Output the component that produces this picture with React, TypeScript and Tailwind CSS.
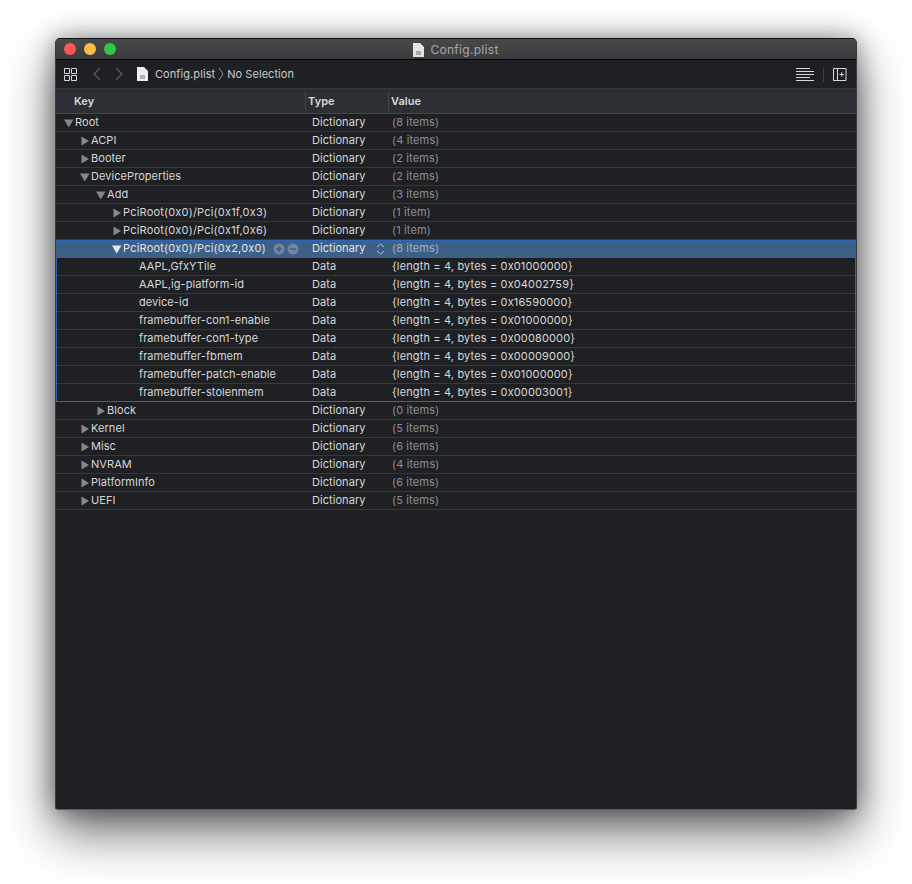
import React from "react";

type Row = { d: number; k: string; t: string; v: string; o?: boolean };
const before: Row[] = [
  { d: 0, k: "Root", t: "Dictionary", v: "(8 items)", o: true },
  { d: 1, k: "ACPI", t: "Dictionary", v: "(4 items)" },
  { d: 1, k: "Booter", t: "Dictionary", v: "(2 items)" },
  { d: 1, k: "DeviceProperties", t: "Dictionary", v: "(2 items)", o: true },
  { d: 2, k: "Add", t: "Dictionary", v: "(3 items)", o: true },
  { d: 3, k: "PciRoot(0x0)/Pci(0x1f,0x3)", t: "Dictionary", v: "(1 item)" },
  { d: 3, k: "PciRoot(0x0)/Pci(0x1f,0x6)", t: "Dictionary", v: "(1 item)" },
];
const leaves: [string, string][] = [
  ["AAPL,GfxYTile", "{length = 4, bytes = 0x01000000}"],
  ["AAPL,ig-platform-id", "{length = 4, bytes = 0x04002759}"],
  ["device-id", "{length = 4, bytes = 0x16590000}"],
  ["framebuffer-con1-enable", "{length = 4, bytes = 0x01000000}"],
  ["framebuffer-con1-type", "{length = 4, bytes = 0x00080000}"],
  ["framebuffer-fbmem", "{length = 4, bytes = 0x00009000}"],
  ["framebuffer-patch-enable", "{length = 4, bytes = 0x01000000}"],
  ["framebuffer-stolenmem", "{length = 4, bytes = 0x00003001}"],
];
const after: Row[] = [
  { d: 2, k: "Block", t: "Dictionary", v: "(0 items)" },
  { d: 1, k: "Kernel", t: "Dictionary", v: "(5 items)" },
  { d: 1, k: "Misc", t: "Dictionary", v: "(6 items)" },
  { d: 1, k: "NVRAM", t: "Dictionary", v: "(4 items)" },
  { d: 1, k: "PlatformInfo", t: "Dictionary", v: "(6 items)" },
  { d: 1, k: "UEFI", t: "Dictionary", v: "(5 items)" },
];

function Tri({ open, color = "#85878a" }: { open?: boolean; color?: string }) {
  return (
    <svg width="10" height="10" viewBox="0 0 10 10" className="shrink-0">
      {open ? <path d="M0 1.5H9.5L4.75 9.5Z" fill={color} /> : <path d="M1.5 0.5V9.5L9 5Z" fill={color} />}
    </svg>
  );
}

const indent = ["pl-[8px]", "pl-[24px]", "pl-[40px]", "pl-[56px]"];

function TreeRow({ r }: { r: Row }) {
  return (
    <div className="flex h-[18px] items-center border-b border-[#36383b] text-[#d6d7d8]">
      <div className={`flex w-[256px] items-center gap-[1px] ${r.d === 3 ? "tracking-[0.2px]" : "tracking-[0.06px]"} ${indent[r.d]}`}>
        <Tri open={r.o} />
        <span>{r.k}</span>
      </div>
      <div className="w-[80px] tracking-[0.06px]">{r.t}</div>
      <div className="text-[#8d8f92]">{r.v}</div>
    </div>
  );
}

export default function App() {
  return (
    <div className="h-[884px] w-[912px] overflow-hidden bg-white pl-[55px] pt-[38px] text-[11px] tracking-[0.14px] [font-family:Inter,'Noto_Sans',sans-serif]">
      <div className="flex h-[772px] w-[802px] flex-col overflow-hidden rounded-t-[5px] rounded-b-[3px] border-x border-b border-x-[#3b3c3f] border-b-[#5a5b5e] bg-[#1f2024] shadow-[0_22px_50px_rgba(0,0,0,0.58),0_0_24px_rgba(0,0,0,0.4)]">
        <div className="relative flex h-[22px] shrink-0 items-center justify-center gap-[6px] border-b border-t border-b-black border-t-[#111] bg-gradient-to-b from-[#48494b] to-[#3a3b3d] pt-[1px] text-[12px] tracking-[0.3px] text-[#a8a9aa]">
          <div className="absolute left-[8px] top-[4px] flex gap-[8px]">
            <span className="h-[12px] w-[12px] rounded-full bg-[#fc5753]" />
            <span className="h-[12px] w-[12px] rounded-full bg-[#fdbc40]" />
            <span className="h-[12px] w-[12px] rounded-full bg-[#33c748]" />
          </div>
          <svg width="11" height="14" viewBox="0 0 11 14">
            <path d="M0 0H7L11 4V14H0Z" fill="#e4e4e4" />
            <path d="M3 8H8V12H3Z" fill="#a9a9a9" />
          </svg>
          <span>Config.plist</span>
        </div>
        <div className="flex h-[29px] shrink-0 items-center border-b border-[#35373a] bg-[#1f2024] pl-[8px] pr-[9px] text-[#c9cacb]">
          <svg width="13" height="13" viewBox="0 0 13 13" fill="none" stroke="#d8d8d8" className="mr-[15px]">
            <path d="M.5.5H5.5V5.5H.5ZM7.5 .5H12.5V5.5H7.5ZM.5 7.5H5.5V12.5H.5ZM7.5 7.5H12.5V12.5H7.5Z" />
          </svg>
          <svg width="10" height="14" viewBox="0 0 10 14" fill="none" stroke="#5d5f62" strokeWidth="1.2" className="mr-[12px]">
            <path d="M8 1L2 7L8 13" />
          </svg>
          <svg width="10" height="14" viewBox="0 0 10 14" fill="none" stroke="#5d5f62" strokeWidth="1.2" className="mr-[13px]">
            <path d="M2 1L8 7L2 13" />
          </svg>
          <svg width="11" height="14" viewBox="0 0 11 14" className="mr-[7px]">
            <path d="M0 0H7L11 4V14H0Z" fill="#eeeeee" />
            <path d="M3 8H8V12H3Z" fill="#b0b0b0" />
          </svg>
          <span className="tracking-[0.08px]">Config.plist</span>
          <svg width="6" height="14" viewBox="0 0 6 14" fill="none" stroke="#8a8b8d" className="mx-[3px]">
            <path d="M1 1L5 7L1 13" />
          </svg>
          <span className="tracking-[0.05px]">No Selection</span>
          <svg width="18" height="13" viewBox="0 0 18 13" stroke="#d8d8d8" className="ml-auto mr-[9px]">
            <path d="M0 .5H14M0 3.5H18M0 6.5H18M0 9.5H14M0 12.5H18" />
          </svg>
          <div className="mr-[9px] h-[15px] w-px bg-[#3c3e41]" />
          <svg width="14" height="13" viewBox="0 0 14 13" fill="none" stroke="#d8d8d8">
            <path d="M.5.5H13V12.5H.5ZM4.5.5V12.5M6.5 6.5H11M8.75 4.2V8.8" />
          </svg>
        </div>
        <div className="flex h-[25px] shrink-0 items-center border-b border-[#45474a] bg-[#2c2f33] font-semibold tracking-[0.06px] text-[#d8d9da]">
          <div className="h-full w-[249px] pl-[18px] leading-[24px]">Key</div>
          <div className="flex h-[19px] w-[83px] items-center border-l border-[#45474a] pl-[2px]">Type</div>
          <div className="flex h-[19px] items-center border-l border-[#45474a] pl-[2px]">Value</div>
        </div>
        <div className="flex-1">
          {before.map((r) => <TreeRow key={r.k} r={r} />)}
          <div className="h-[162px] border-x border-b border-[#2d67b8]">
            <div className="-mx-px flex h-[18px] items-center border-b border-[#3d6088] bg-[#3d6088] text-[#e2e5e9] shadow-[inset_0_1px_0_#2d67b8]">
              <div className="flex w-[217px] items-center gap-[1px] pl-[56px] tracking-[0.2px]">
                <Tri open color="#e6e8eb" />
                <span>PciRoot(0x0)/Pci(0x2,0x0)</span>
              </div>
              <div className="flex w-[39px] items-center gap-[2px]">
                <svg width="12" height="12" viewBox="0 0 12 12"><circle cx="6" cy="6" r="5.5" fill="#73859b" /><path d="M3 6H9M6 3V9" stroke="#3d6088" strokeWidth="1.5" /></svg>
                <svg width="12" height="12" viewBox="0 0 12 12"><circle cx="6" cy="6" r="5.5" fill="#73859b" /><path d="M3 6H9" stroke="#3d6088" strokeWidth="1.5" /></svg>
              </div>
              <div className="flex w-[80px] items-center justify-between pr-[7px] tracking-[0.06px]">
                <span>Dictionary</span>
                <svg width="9" height="12" viewBox="0 0 9 12" fill="none" stroke="#b9c3d0">
                  <path d="M1 4L4.5 1L8 4M1 8L4.5 11L8 8" />
                </svg>
              </div>
              <span className="text-[#a3b0c0]">(8 items)</span>
            </div>
            {leaves.map(([k, v], i) => (
              <div key={k} className={`flex items-center text-[#d6d7d8] ${i < leaves.length - 1 ? "h-[18px] border-b border-[#36383b]" : "h-[17px]"}`}>
                <div className="w-[255px] pl-[82px] tracking-[0.06px]">{k}</div>
                <div className="w-[80px] tracking-[0.06px]">Data</div>
                <div>{v}</div>
              </div>
            ))}
          </div>
          {after.map((r) => <TreeRow key={r.k} r={r} />)}
        </div>
      </div>
    </div>
  );
}
